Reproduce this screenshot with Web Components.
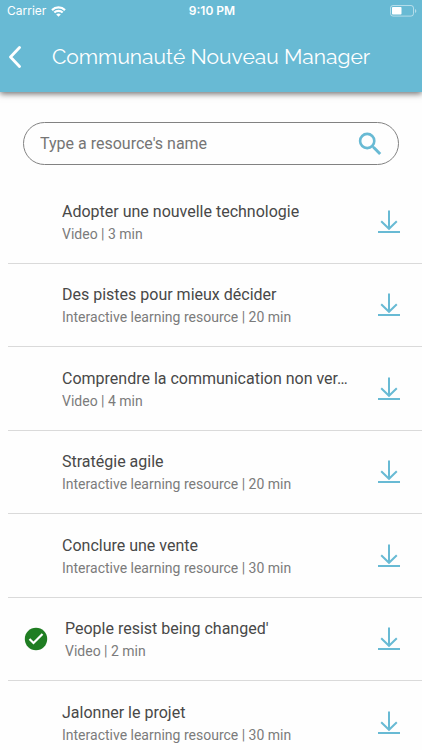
<!DOCTYPE html>
<html lang="fr">
<head>
<meta charset="utf-8">
<meta name="viewport" content="width=device-width, initial-scale=1">
<title>Communauté Nouveau Manager</title>
<style>
    :root {
        --accent-color: #68bad4;
        --text-color: #484848;
        --text-muted: #7b7b7b;
        --line-color: #dadada;
        --done-color: #1f7d22;
    }
    body {
        margin: 0;
        background: #fefefe;
        color: var(--text-color);
        font-family: Roboto, "Liberation Sans", sans-serif;
    }
</style>
</head>
<body>
<resource-app>
    <status-bar slot="header" carrier="Carrier" time="9:10 PM"></status-bar>
    <page-header slot="header">Communauté Nouveau Manager</page-header>
    <search-box placeholder="Type a resource's name"></search-box>
    <resource-list>
        <resource-item kind="Video" duration="3 min">Adopter une nouvelle technologie</resource-item>
        <resource-item kind="Interactive learning resource" duration="20 min">Des pistes pour mieux décider</resource-item>
        <resource-item kind="Video" duration="4 min">Comprendre la communication non ver…</resource-item>
        <resource-item kind="Interactive learning resource" duration="20 min">Stratégie agile</resource-item>
        <resource-item kind="Interactive learning resource" duration="30 min">Conclure une vente</resource-item>
        <resource-item kind="Video" duration="2 min" done>People resist being changed'</resource-item>
        <resource-item kind="Interactive learning resource" duration="30 min">Jalonner le projet</resource-item>
    </resource-list>
</resource-app>

<script>
class ResourceApp extends HTMLElement {
    constructor() {
        super();

        this.attachShadow({ mode: "open" });

        this.shadowRoot.innerHTML = `
            <style>
                :host {
                    display: flex;
                    flex-direction: column;
                    height: 100vh;
                }
                header {
                    position: relative;
                    background: var(--accent-color);
                    color: #fff;
                    box-shadow: 0 2px 6px rgba(0, 0, 0, .55);
                }
                main {
                    flex: 1;
                    min-height: 0;
                    overflow-y: auto;
                    scrollbar-width: none;
                }
            </style>

            <header><slot name="header"></slot></header>
            <main><slot></slot></main>
        `;
    }
}

class StatusBar extends HTMLElement {
    constructor() {
        super();

        this.attachShadow({ mode: "open" });

        this.shadowRoot.innerHTML = `
            <style>
                :host {
                    display: grid;
                    grid-template-columns: 1fr auto 1fr;
                    align-items: center;
                    height: 22px;
                    padding: 0 5px 0 7px;
                    font: 12px/22px Inter, "Liberation Sans", sans-serif;
                }
                .network {
                    display: flex;
                    align-items: center;
                    gap: 5px;
                }
                .time {
                    font-weight: 600;
                }
                .battery {
                    justify-self: end;
                }
                svg {
                    display: block;
                }
            </style>

            <div class="network">
                <span class="carrier"></span>
                <svg width="15" height="11" viewBox="0 0 15 11" fill="none" stroke="#fff" stroke-width="2.2" aria-hidden="true">
                    <path d="M1 4.1a9.2 9.2 0 0 1 13 0"/>
                    <path d="M3.3 6.6a5.9 5.9 0 0 1 8.4 0"/>
                    <path d="M7.5 10.8 5.2 8.5a3.3 3.3 0 0 1 4.6 0z" fill="#fff" stroke="none"/>
                </svg>
            </div>
            <span class="time"></span>
            <svg class="battery" width="27" height="12" viewBox="0 0 27 12" aria-hidden="true">
                <rect x=".5" y=".5" width="23" height="10.6" rx="2.5" fill="none" stroke="#fff" stroke-opacity=".5"/>
                <rect x="2" y="2" width="9.5" height="7.6" rx=".8" fill="#fff"/>
                <path d="M25 4v4c1.8-.8 1.8-3.2 0-4z" fill="#fff" fill-opacity=".5"/>
            </svg>
        `;
    }

    connectedCallback() {
        this.shadowRoot.querySelector(".carrier").textContent = this.getAttribute("carrier");
        this.shadowRoot.querySelector(".time").textContent = this.getAttribute("time");
    }
}

class PageHeader extends HTMLElement {
    constructor() {
        super();

        this.attachShadow({ mode: "open" });

        this.shadowRoot.innerHTML = `
            <style>
                :host {
                    display: grid;
                    grid-template-columns: 32px 1fr 32px;
                    align-items: center;
                    height: 70px;
                }
                button {
                    padding: 0 0 0 8px;
                    border: 0;
                    background: none;
                    color: inherit;
                    cursor: pointer;
                }
                svg {
                    display: block;
                }
                h1 {
                    margin: 0;
                    font: 400 21px/28px Raleway, Lato, sans-serif;
                    text-align: center;
                    white-space: nowrap;
                }
            </style>

            <button type="button" aria-label="Back">
                <svg width="14" height="22" viewBox="0 0 14 22" fill="none" stroke="currentColor" stroke-width="2.8" stroke-linecap="round" stroke-linejoin="round">
                    <path d="M11.5 1.5 2.5 11l9 9.500"/>
                </svg>
            </button>
            <h1><slot></slot></h1>
        `;
    }
}

class SearchBox extends HTMLElement {
    constructor() {
        super();

        this.attachShadow({ mode: "open" });

        this.shadowRoot.innerHTML = `
            <style>
                :host {
                    display: block;
                    padding: 30px 23px 15px;
                }
                form {
                    display: flex;
                    align-items: center;
                    box-sizing: border-box;
                    height: 43px;
                    padding: 0 16px;
                    border: 1px solid #828282;
                    border-radius: 22px;
                }
                input {
                    flex: 1;
                    min-width: 0;
                    padding: 0;
                    border: 0;
                    outline: 0;
                    background: none;
                    color: var(--text-color);
                    font: 16px/24px Roboto, "Liberation Sans", sans-serif;
                }
                input::placeholder {
                    color: #757575;
                    opacity: 1;
                }
                button {
                    padding: 0;
                    border: 0;
                    background: none;
                    color: var(--accent-color);
                    cursor: pointer;
                }
                svg {
                    display: block;
                }
            </style>

            <form role="search">
                <input type="text">
                <button type="button" aria-label="Search">
                    <svg width="24" height="24" viewBox="0 0 24 24" fill="none" stroke="currentColor" stroke-width="2.6">
                        <circle cx="9.2" cy="9" r="7.1"/>
                        <path d="M14.3 14.1l2 2" stroke-width="2"/>
                        <path d="M15.5 15.300l6.700 6.700" stroke-width="3"/>
                    </svg>
                </button>
            </form>
        `;
    }

    connectedCallback() {
        const input = this.shadowRoot.querySelector("input");
        const text = this.getAttribute("placeholder") || "";
        input.placeholder = text;
        input.setAttribute("aria-label", text);

        this.shadowRoot.querySelector("form").addEventListener("submit", (e) => e.preventDefault());
    }
}

class ResourceList extends HTMLElement {
    constructor() {
        super();

        this.attachShadow({ mode: "open" });

        this.shadowRoot.innerHTML = `
            <style>
                :host {
                    display: grid;
                    grid-auto-rows: 84px 83px;
                    padding-left: 8px;
                }
            </style>

            <slot></slot>
        `;
    }

    connectedCallback() {
        this.setAttribute("role", "list");
    }
}

class ResourceItem extends HTMLElement {
    constructor() {
        super();

        this.attachShadow({ mode: "open" });

        this.shadowRoot.innerHTML = `
            <style>
                :host {
                    display: grid;
                    grid-template-columns: 54px minmax(0, 1fr) 24px;
                    align-items: center;
                    box-sizing: border-box;
                    padding-right: 21px;
                    border-bottom: 1px solid var(--line-color);
                }
                :host([done]) {
                    grid-template-columns: 57px minmax(0, 1fr) 24px;
                }
                .done {
                    visibility: hidden;
                    padding-left: 16px;
                }
                :host([done]) .done {
                    visibility: visible;
                }
                .text {
                    padding-right: 20px;
                }
                h2, p {
                    margin: 0;
                    overflow: hidden;
                    text-overflow: ellipsis;
                    white-space: nowrap;
                }
                h2 {
                    font-size: 16px;
                    font-weight: 400;
                    line-height: 24px;
                }
                p {
                    color: var(--text-muted);
                    font-size: 14px;
                    line-height: 20px;
                }
                button {
                    padding: 0;
                    border: 0;
                    background: none;
                    color: var(--accent-color);
                    cursor: pointer;
                }
                svg {
                    display: block;
                }
            </style>

            <div class="done">
                <svg width="24" height="24" viewBox="0 0 24 24" aria-hidden="true">
                    <circle cx="12" cy="12" r="11.2" fill="var(--done-color)"/>
                    <path d="M5.500 12l4 4 9-9" fill="none" stroke="#fff" stroke-width="2.2"/>
                </svg>
            </div>
            <div class="text">
                <h2><slot></slot></h2>
                <p></p>
            </div>
            <button type="button" aria-label="Download">
                <svg width="24" height="24" viewBox="0 0 24 24" fill="none" stroke="currentColor" stroke-width="2">
                    <path d="M12 .5v18.500M4.200 11.200l7.800 7.600 7.800-7.600M1 22h22"/>
                </svg>
            </button>
        `;
    }

    connectedCallback() {
        this.setAttribute("role", "listitem");
        this.shadowRoot.querySelector("p").textContent =
            this.getAttribute("kind") + " | " + this.getAttribute("duration");
    }
}

customElements.define("resource-app", ResourceApp);
customElements.define("status-bar", StatusBar);
customElements.define("page-header", PageHeader);
customElements.define("search-box", SearchBox);
customElements.define("resource-list", ResourceList);
customElements.define("resource-item", ResourceItem);
</script>
</body>
</html>
